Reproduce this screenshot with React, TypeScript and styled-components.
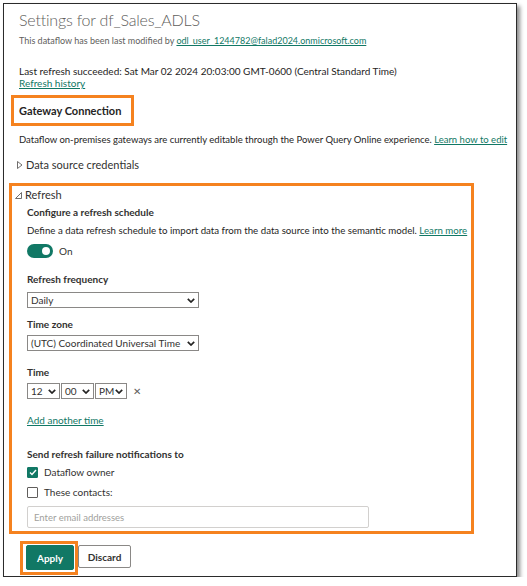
import React from "react";
import styled, { createGlobalStyle } from "styled-components";

const Global = createGlobalStyle`
  html, body { margin: 0; padding: 0; background: #fff; }
  body { font-family: Lato, "Open Sans", sans-serif; color: #252423; }
`;

const TEAL = "#117865";
const ORANGE = "#f5821f";

const Frame = styled.div`
  margin: 3px 0 0 3px;
  width: 512px;
  height: 572px;
  border: 1px solid #2b2b2b;
  box-shadow: 3px 3px 4px rgba(0, 0, 0, 0.45);
  background: #fff;
  overflow: hidden;
`;

const Inner = styled.div`
  display: flex;
  flex-direction: column;
  padding: 4px 0 0 15px;
`;

const Title = styled.h1`
  margin: 0;
  font-size: 16px;
  font-weight: 300;
  letter-spacing: -0.2px;
  color: #605e5c;
  line-height: 24px;
`;

const Small = styled.div`
  font-size: 9px;
  color: #605e5c;
  margin-top: 3px;
  line-height: 12px;
`;

const Link = styled.a`
  color: ${TEAL};
  text-decoration: underline;
  cursor: pointer;
`;

const Body = styled.div<{ $mt?: number; $fs?: number }>`
  font-size: ${(p) => p.$fs ?? 10}px;
  line-height: 12px;
  margin-top: ${(p) => p.$mt ?? 0}px;
  color: #252423;
  white-space: nowrap;
`;

const Highlight = styled.div`
  border: 3px solid ${ORANGE};
  box-sizing: border-box;
`;

const GatewayBox = styled(Highlight)`
  margin: 6px 0 0 -8px;
  width: 123px;
  height: 31px;
  display: flex;
  align-items: center;
  padding-left: 5px;
  font-size: 11px;
  font-weight: 700;
  color: #252423;
`;

const Expander = styled.div<{ $mt?: number; $ml?: number }>`
  display: flex;
  align-items: center;
  gap: 3px;
  font-size: 11px;
  line-height: 12px;
  color: #323130;
  margin-top: ${(p) => p.$mt ?? 0}px;
  margin-left: ${(p) => p.$ml ?? 0}px;
`;

const RefreshBox = styled(Highlight)`
  margin: 12px 0 0 -10px;
  width: 465px;
  height: 351px;
  padding: 3px 0 0 3px;
  display: flex;
  flex-direction: column;
`;

const Section = styled.div`
  display: flex;
  flex-direction: column;
  padding-left: 12px;
`;

const Heading = styled.div<{ $mt?: number }>`
  font-size: 10px;
  font-weight: 700;
  color: #323130;
  margin-top: ${(p) => p.$mt ?? 0}px;
  line-height: 12px;
`;

const ToggleRow = styled.div`
  display: flex;
  align-items: center;
  gap: 6px;
  margin-top: 8px;
  font-size: 10px;
  color: #323130;
`;

const Toggle = styled.div`
  width: 26px;
  height: 14px;
  border-radius: 7px;
  background: ${TEAL};
  position: relative;
  &::after {
    content: "";
    position: absolute;
    right: 3px;
    top: 3px;
    width: 8px;
    height: 8px;
    border-radius: 50%;
    background: #fff;
  }
`;

const SelectBox = styled.div<{ $w: number; $mt?: number }>`
  width: ${(p) => p.$w}px;
  height: 16px;
  border: 1px solid #8a8886;
  box-sizing: border-box;
  display: flex;
  align-items: center;
  justify-content: space-between;
  padding: 0 3px 0 3px;
  font-size: 10px;
  color: #323130;
  margin-top: ${(p) => p.$mt ?? 0}px;
  background: #fff;
`;

const TimeRow = styled.div`
  display: flex;
  align-items: center;
  gap: 1px;
  margin-top: 5px;
`;

const Close = styled.span`
  font-size: 10px;
  color: #605e5c;
  margin-left: 5px;
`;

const CheckRow = styled.div<{ $mt?: number }>`
  display: flex;
  align-items: center;
  gap: 6px;
  height: 12px;
  margin-top: ${(p) => p.$mt ?? 0}px;
  font-size: 10px;
  color: #323130;
`;

const Box = styled.div<{ $checked?: boolean }>`
  width: 11px;
  height: 11px;
  border: 1px solid ${(p) => (p.$checked ? TEAL : "#605e5c")};
  background: ${(p) => (p.$checked ? TEAL : "#fff")};
  border-radius: 1px;
  box-sizing: border-box;
  display: flex;
  align-items: center;
  justify-content: center;
`;

const EmailInput = styled.div`
  width: 342px;
  height: 22px;
  border: 1px solid #d2d0ce;
  box-sizing: border-box;
  margin-top: 8px;
  display: flex;
  align-items: center;
  padding-left: 6px;
  font-size: 9.5px;
  color: #a19f9d;
  border-radius: 2px;
`;

const Actions = styled.div`
  display: flex;
  align-items: flex-start;
  margin: 7px 0 0 1px;
`;

const ApplyWrap = styled(Highlight)`
  padding: 1px 1px 2px 3px;
`;

const Btn = styled.button<{ $primary?: boolean }>`
  height: ${(p) => (p.$primary ? 25 : 23)}px;
  margin-top: ${(p) => (p.$primary ? 0 : 4)}px;
  font-family: inherit;
  font-size: 10px;
  font-weight: 700;
  border-radius: 2px;
  border: 1px solid ${(p) => (p.$primary ? TEAL : "#8a8886")};
  background: ${(p) => (p.$primary ? TEAL : "#fff")};
  color: ${(p) => (p.$primary ? "#fff" : "#323130")};
  padding: 0;
  width: ${(p) => (p.$primary ? 48 : 53)}px;
`;

const Chevron = () => (
  <svg width="8" height="5" viewBox="0 0 8 5">
    <path d="M0.8 0.8 L4 4 L7.2 0.8" fill="none" stroke="#252423" strokeWidth="1.7" />
  </svg>
);

const Select = ({ w, mt, children }: { w: number; mt?: number; children: React.ReactNode }) => (
  <SelectBox $w={w} $mt={mt}>
    <span>{children}</span>
    <Chevron />
  </SelectBox>
);

export default function App() {
  return (
    <>
      <Global />
      <Frame>
        <Inner>
          <Title>Settings for df_Sales_ADLS</Title>
          <Small>
            This dataflow has been last modified by <Link>odl_user_1244782@falad2024.onmicrosoft.com</Link>
          </Small>
          <Body $mt={18}>Last refresh succeeded: Sat Mar 02 2024 20:03:00 GMT-0600 (Central Standard Time)</Body>
          <Body>
            <Link>Refresh history</Link>
          </Body>
          <GatewayBox>Gateway Connection</GatewayBox>
          <Body $mt={8} $fs={9.5}>
            Dataflow on-premises gateways are currently editable through the Power Query Online experience.{" "}
            <Link>Learn how to edit</Link>
          </Body>
          <Expander $mt={13} $ml={-2}>
            <svg width="6" height="8" viewBox="0 0 6 8">
              <path d="M0.5 0.5 L5 4 L0.5 7.5 Z" fill="none" stroke="#605e5c" strokeWidth="0.9" />
            </svg>
            Data source credentials
          </Expander>
          <RefreshBox>
            <Expander>
              <svg width="7" height="7" viewBox="0 0 7 7">
                <path d="M6.5 0.5 L6.5 6.5 L0.5 6.5 Z" fill="none" stroke="#605e5c" strokeWidth="0.9" />
              </svg>
              Refresh
            </Expander>
            <Section>
              <Heading $mt={5}>Configure a refresh schedule</Heading>
              <Body $mt={6} $fs={9.7}>
                Define a data refresh schedule to import data from the data source into the semantic model.{" "}
                <Link>Learn more</Link>
              </Body>
              <ToggleRow>
                <Toggle />
                On
              </ToggleRow>
              <Heading $mt={15}>Refresh frequency</Heading>
              <Select w={172} mt={7}>Daily</Select>
              <Heading $mt={10}>Time zone</Heading>
              <Select w={172} mt={5}>(UTC) Coordinated Universal Time</Select>
              <Heading $mt={15}>Time</Heading>
              <TimeRow>
                <Select w={33}>12</Select>
                <Select w={33}>00</Select>
                <Select w={32}>PM</Select>
                <Close>✕</Close>
              </TimeRow>
              <Body $mt={15}>
                <Link>Add another time</Link>
              </Body>
              <Heading $mt={22}>Send refresh failure notifications to</Heading>
              <CheckRow $mt={6}>
                <Box $checked>
                  <svg width="8" height="7" viewBox="0 0 8 7">
                    <path d="M1 3.5 L3 5.5 L7 1" fill="none" stroke="#fff" strokeWidth="1.4" />
                  </svg>
                </Box>
                Dataflow owner
              </CheckRow>
              <CheckRow $mt={8}>
                <Box />
                These contacts:
              </CheckRow>
              <EmailInput>Enter email addresses</EmailInput>
            </Section>
          </RefreshBox>
          <Actions>
            <ApplyWrap>
              <Btn $primary>Apply</Btn>
            </ApplyWrap>
            <Btn>Discard</Btn>
          </Actions>
        </Inner>
      </Frame>
    </>
  );
}
